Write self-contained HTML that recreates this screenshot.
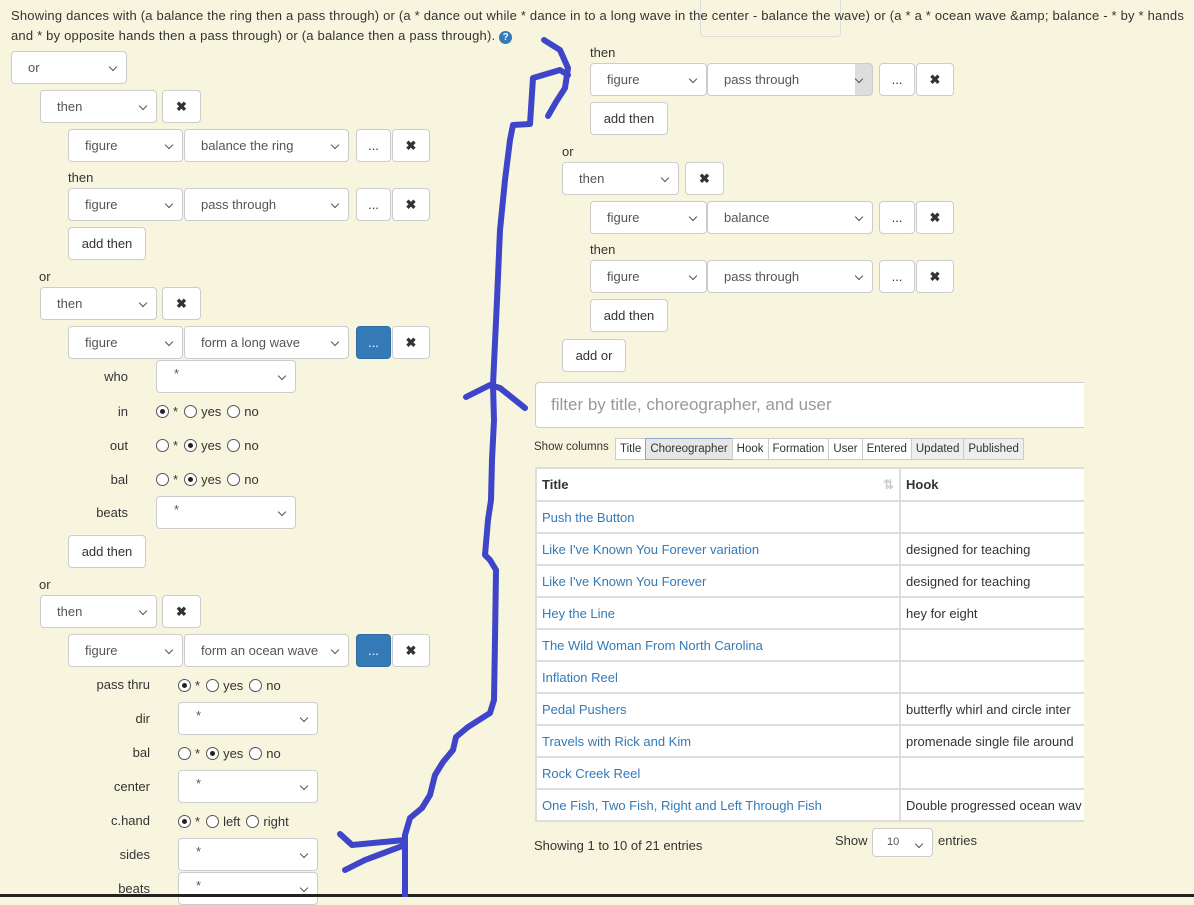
<!DOCTYPE html>
<html><head><meta charset="utf-8"><style>
*{box-sizing:border-box;margin:0;padding:0}
body{width:1194px;height:897px;overflow:hidden;background:#f8f5df;font-family:"Liberation Sans",sans-serif;font-size:13px;color:#333;position:relative}
.a{position:absolute}
.sel{position:absolute;height:33px;background:#fff;border:1px solid #ccc;border-radius:4px;padding:0 0 0 30px;line-height:31px;color:#555;font-size:13px;white-space:nowrap;overflow:hidden}
.sel:after{content:"";position:absolute;right:10px;top:12px;width:5px;height:5px;border-right:1.3px solid #555;border-bottom:1.3px solid #555;transform:rotate(45deg)}
.btn{position:absolute;height:33px;background:#fff;border:1px solid #ccc;border-radius:4px;text-align:center;line-height:31px;color:#333;font-size:13px}
.x{font-weight:bold;font-size:13px}
.blue{background:#337ab7;border-color:#2e6da4;color:#fff}
.lbl{position:absolute;text-align:right;width:60px}
.r{display:inline-block;width:13px;height:13px;border:1px solid #555;border-radius:50%;vertical-align:-2px;position:relative;margin-right:4px;background:#fff}
.r.on:after{content:"";position:absolute;left:3px;top:3px;width:5px;height:5px;border-radius:50%;background:#222}
.rad{position:absolute;font-size:13px;white-space:nowrap}
.rad span{margin-right:6px}
table{border-collapse:collapse;position:absolute;left:535px;top:467px;width:551px;background:#fff}
td,th{border:2px solid #ddd;height:32px;padding:0 5px;text-align:left;font-size:13px}
td a{color:#337ab7;text-decoration:none}
.cb{display:inline-block;border:1px solid #ccc;background:#fff;padding:0 4px;height:22px;line-height:20px;font-size:11.5px;margin-left:-1px}
</style></head><body>
<div class="a" style="left:700px;top:-20px;width:141px;height:57px;border:1px solid #ddd;border-radius:4px"></div>
<div class="a" style="left:11px;top:6px;width:1183px;line-height:20px;letter-spacing:0.2px;white-space:nowrap">Showing dances with (a balance the ring then a pass through) or (a * dance out while * dance in to a long wave in the center - balance the wave) or (a * a * ocean wave &amp;amp; balance - * by * hands<br>and * by opposite hands then a pass through) or (a balance then a pass through). <span style="display:inline-block;width:13px;height:13px;border-radius:50%;background:#337ab7;color:#fff;font-size:10px;line-height:13px;text-align:center;font-weight:bold;letter-spacing:0">?</span></div>

<div class="sel" style="left:11px;top:51px;width:116px;padding-left:16px">or</div>
<div class="sel" style="left:40px;top:90px;width:117px;padding-left:16px">then</div><div class="btn x" style="left:162px;top:90px;width:39px">✖</div>
<div class="sel" style="left:68px;top:129px;width:115px;padding-left:16px">figure</div><div class="sel" style="left:184px;top:129px;width:165px;padding-left:16px">balance the ring</div><div class="btn" style="left:356px;top:129px;width:35px">...</div><div class="btn x" style="left:392px;top:129px;width:38px">✖</div>
<div class="a" style="left:68px;top:170px">then</div>
<div class="sel" style="left:68px;top:188px;width:115px;padding-left:16px">figure</div><div class="sel" style="left:184px;top:188px;width:165px;padding-left:16px">pass through</div><div class="btn" style="left:356px;top:188px;width:35px">...</div><div class="btn x" style="left:392px;top:188px;width:38px">✖</div>
<div class="btn" style="left:68px;top:227px;width:78px">add then</div>
<div class="a" style="left:39px;top:269px">or</div>
<div class="sel" style="left:40px;top:287px;width:117px;padding-left:16px">then</div><div class="btn x" style="left:162px;top:287px;width:39px">✖</div>
<div class="sel" style="left:68px;top:326px;width:115px;padding-left:16px">figure</div><div class="sel" style="left:184px;top:326px;width:165px;padding-left:16px">form a long wave</div><div class="btn blue" style="left:356px;top:326px;width:35px">...</div><div class="btn x" style="left:392px;top:326px;width:38px">✖</div>
<div class="lbl" style="left:68px;top:369px">who</div><div class="sel" style="left:156px;top:360px;width:140px;padding-left:17px;line-height:26px">*</div>
<div class="lbl" style="left:68px;top:404px">in</div><div class="rad" style="left:156px;top:404px"><i class="r on"></i><span>*</span><i class="r"></i><span>yes</span><i class="r"></i><span>no</span></div>
<div class="lbl" style="left:68px;top:438px">out</div><div class="rad" style="left:156px;top:438px"><i class="r"></i><span>*</span><i class="r on"></i><span>yes</span><i class="r"></i><span>no</span></div>
<div class="lbl" style="left:68px;top:472px">bal</div><div class="rad" style="left:156px;top:472px"><i class="r"></i><span>*</span><i class="r on"></i><span>yes</span><i class="r"></i><span>no</span></div>
<div class="lbl" style="left:68px;top:505px">beats</div><div class="sel" style="left:156px;top:496px;width:140px;padding-left:17px;line-height:26px">*</div>
<div class="btn" style="left:68px;top:535px;width:78px">add then</div>
<div class="a" style="left:39px;top:577px">or</div>
<div class="sel" style="left:40px;top:595px;width:117px;padding-left:16px">then</div><div class="btn x" style="left:162px;top:595px;width:39px">✖</div>
<div class="sel" style="left:68px;top:634px;width:115px;padding-left:16px">figure</div><div class="sel" style="left:184px;top:634px;width:165px;padding-left:16px">form an ocean wave</div><div class="btn blue" style="left:356px;top:634px;width:35px">...</div><div class="btn x" style="left:392px;top:634px;width:38px">✖</div>
<div class="lbl" style="left:60px;top:677px;width:90px">pass thru</div><div class="rad" style="left:178px;top:678px"><i class="r on"></i><span>*</span><i class="r"></i><span>yes</span><i class="r"></i><span>no</span></div>
<div class="lbl" style="left:60px;top:711px;width:90px">dir</div><div class="sel" style="left:178px;top:702px;width:140px;padding-left:17px;line-height:26px">*</div>
<div class="lbl" style="left:60px;top:745px;width:90px">bal</div><div class="rad" style="left:178px;top:746px"><i class="r"></i><span>*</span><i class="r on"></i><span>yes</span><i class="r"></i><span>no</span></div>
<div class="lbl" style="left:60px;top:779px;width:90px">center</div><div class="sel" style="left:178px;top:770px;width:140px;padding-left:17px;line-height:26px">*</div>
<div class="lbl" style="left:60px;top:813px;width:90px">c.hand</div><div class="rad" style="left:178px;top:814px"><i class="r on"></i><span>*</span><i class="r"></i><span>left</span><i class="r"></i><span>right</span></div>
<div class="lbl" style="left:60px;top:847px;width:90px">sides</div><div class="sel" style="left:178px;top:838px;width:140px;padding-left:17px;line-height:26px">*</div>
<div class="lbl" style="left:60px;top:881px;width:90px">beats</div><div class="sel" style="left:178px;top:872px;width:140px;padding-left:17px;line-height:26px">*</div>

<div class="a" style="left:590px;top:45px">then</div>
<div class="sel" style="left:590px;top:63px;width:117px;padding-left:16px">figure</div><div class="sel" style="left:707px;top:63px;width:166px;padding-left:16px;background:linear-gradient(90deg,#fff 147px,#ddd 147px)">pass through</div><div class="btn" style="left:879px;top:63px;width:36px">...</div><div class="btn x" style="left:916px;top:63px;width:38px">✖</div>
<div class="btn" style="left:590px;top:102px;width:78px">add then</div>
<div class="a" style="left:562px;top:144px">or</div>
<div class="sel" style="left:562px;top:162px;width:117px;padding-left:16px">then</div><div class="btn x" style="left:685px;top:162px;width:39px">✖</div>
<div class="sel" style="left:590px;top:201px;width:117px;padding-left:16px">figure</div><div class="sel" style="left:707px;top:201px;width:166px;padding-left:16px">balance</div><div class="btn" style="left:879px;top:201px;width:36px">...</div><div class="btn x" style="left:916px;top:201px;width:38px">✖</div>
<div class="a" style="left:590px;top:242px">then</div>
<div class="sel" style="left:590px;top:260px;width:117px;padding-left:16px">figure</div><div class="sel" style="left:707px;top:260px;width:166px;padding-left:16px">pass through</div><div class="btn" style="left:879px;top:260px;width:36px">...</div><div class="btn x" style="left:916px;top:260px;width:38px">✖</div>
<div class="btn" style="left:590px;top:299px;width:78px">add then</div>
<div class="btn" style="left:562px;top:339px;width:64px">add or</div>

<div class="a" style="left:535px;top:382px;width:549px;height:46px;background:#fff;border:1px solid #ccc;border-right:none;border-radius:4px 0 0 4px;padding-left:15px;line-height:44px;font-size:17px;color:#999">filter by title, choreographer, and user</div>
<div class="a" style="left:534px;top:441px;font-size:11.5px">Show columns</div>
<div class="a" style="left:615px;top:438px;white-space:nowrap;font-size:0"><span class="cb" style="margin-left:0">Title</span><span class="cb" style="background:#e6e6e6;border-color:#8aa8cf">Choreographer</span><span class="cb">Hook</span><span class="cb">Formation</span><span class="cb">User</span><span class="cb">Entered</span><span class="cb" style="background:#eee">Updated</span><span class="cb" style="background:#eee">Published</span></div>
<div class="a" style="left:0;top:0;width:1084px;height:897px;overflow:hidden">
<table>
<tr><th style="width:364px;height:33px">Title<span style="float:right;color:#ccc">⇅</span></th><th>Hook</th></tr>
<tr><td><a>Push the Button</a></td><td></td></tr>
<tr><td><a>Like I've Known You Forever variation</a></td><td>designed for teaching</td></tr>
<tr><td><a>Like I've Known You Forever</a></td><td>designed for teaching</td></tr>
<tr><td><a>Hey the Line</a></td><td>hey for eight</td></tr>
<tr><td><a>The Wild Woman From North Carolina</a></td><td></td></tr>
<tr><td><a>Inflation Reel</a></td><td></td></tr>
<tr><td><a>Pedal Pushers</a></td><td style="white-space:nowrap;overflow:hidden;max-width:184px">butterfly whirl and circle inter</td></tr>
<tr><td><a>Travels with Rick and Kim</a></td><td style="white-space:nowrap;overflow:hidden;max-width:184px">promenade single file around</td></tr>
<tr><td><a>Rock Creek Reel</a></td><td></td></tr>
<tr><td><a>One Fish, Two Fish, Right and Left Through Fish</a></td><td style="white-space:nowrap;overflow:hidden;max-width:184px">Double progressed ocean wav</td></tr>
</table>
</div>
<div class="a" style="left:534px;top:838px">Showing 1 to 10 of 21 entries</div>
<div class="a" style="left:835px;top:833px">Show</div>
<div class="sel" style="left:872px;top:828px;width:61px;height:29px;padding-left:14px;line-height:27px;font-size:11px">10</div>
<div class="a" style="left:938px;top:833px">entries</div>
<div class="a" style="left:0;top:894px;width:1194px;height:3px;background:#222"></div>

<svg class="a" style="left:0;top:0" width="1194" height="897"><g fill="none" stroke="#3e45c9" stroke-width="6" stroke-linecap="round" stroke-linejoin="round">
<path d="M405 897L405 835L410 818L422 808L430 795L435 775L443 762L453 750L456 737L468 727L490 713L494 700L495 640L496 570L490 560L485 555L488 520L491 500L492 460L494 420L493 385L497 300L500 230L505 180L510 140L513 125L530 124L533 78L560 70L568 75"/>
<path d="M544 40L560 50L568 68L565 88L556 102L548 116"/>
<path d="M466 397L490 385L500 388L525 408"/>
<path d="M340 834L352 845L405 840M345 870L365 860L405 845"/>
</g></svg>
</body></html>
